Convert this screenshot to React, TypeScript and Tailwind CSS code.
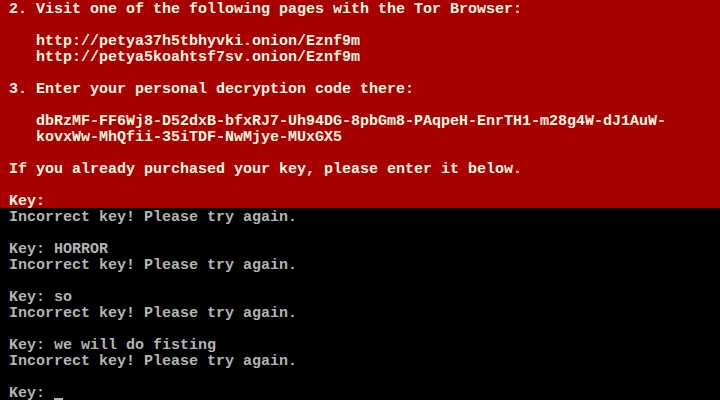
import React from "react";

const redLines: string[] = [
  " 2. Visit one of the following pages with the Tor Browser:",
  "",
  "    http://petya37h5tbhyvki.onion/Eznf9m",
  "    http://petya5koahtsf7sv.onion/Eznf9m",
  "",
  " 3. Enter your personal decryption code there:",
  "",
  "    dbRzMF-FF6Wj8-D52dxB-bfxRJ7-Uh94DG-8pbGm8-PAqpeH-EnrTH1-m28g4W-dJ1AuW-",
  "    kovxWw-MhQfii-35iTDF-NwMjye-MUxGX5",
  "",
  " If you already purchased your key, please enter it below.",
  "",
  " Key:",
];

const blackLines: string[] = [
  " Incorrect key! Please try again.",
  "",
  " Key: HORROR",
  " Incorrect key! Please try again.",
  "",
  " Key: so",
  " Incorrect key! Please try again.",
  "",
  " Key: we will do fisting",
  " Incorrect key! Please try again.",
  "",
];

const Line: React.FC<{ text: string }> = ({ text }) => (
  <div className="h-4 leading-[20px] whitespace-pre">{text || " "}</div>
);

const App: React.FC = () => {
  return (
    <div className="w-[720px] h-[400px] overflow-hidden bg-black font-['Liberation_Mono',monospace] text-[15px] font-bold">
      <div className="bg-[#a80000] text-[#fff8e0]">
        {redLines.map((l, i) => (
          <Line key={i} text={l} />
        ))}
      </div>
      <div className="text-[#b4b4b4]">
        {blackLines.map((l, i) => (
          <Line key={i} text={l} />
        ))}
        <div className="h-4 leading-[20px] whitespace-pre flex">
          <span>{" Key: "}</span>
          <span className="w-[9px] h-4 flex items-end">
            <span className="block w-[9px] h-[2px] bg-[#b4b4b4]" />
          </span>
        </div>
      </div>
    </div>
  );
};

export default App;
